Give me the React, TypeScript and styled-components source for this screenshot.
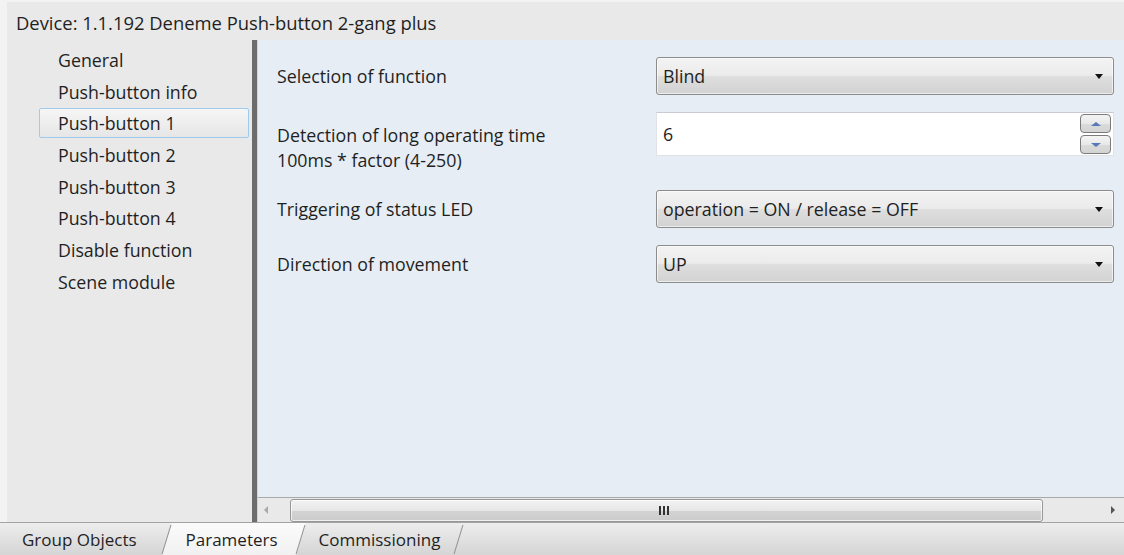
import React from "react";
import styled, { createGlobalStyle, css } from "styled-components";

const Global = createGlobalStyle`
  html, body { margin: 0; padding: 0; background: #f2f2f2; }
  * { box-sizing: border-box; }
  body { font-family: "Open Sans", "Noto Sans", sans-serif; color: #1f1f1f; }
`;

const Frame = styled.div`
  width: 1124px;
  height: 555px;
  overflow: hidden;
  background: #f3f3f3;
  padding: 2px 0 0 7px;
  display: flex;
`;

const Window = styled.div`
  flex: 1;
  display: flex;
  flex-direction: column;
  background: #e9e9e9;
  font-size: 17.8px;
`;

const Header = styled.div`
  height: 38px;
  flex: none;
  display: flex;
  align-items: center;
  padding-left: 9px;
  padding-top: 2px;
  font-size: 18.4px;
`;

const Main = styled.div`
  flex: 1;
  display: flex;
  min-height: 0;
`;

const Nav = styled.ul`
  width: 245px;
  flex: none;
  list-style: none;
  margin: 0;
  padding: 4px 0 0 32px;
  display: grid;
  grid-auto-rows: 31.7px;
  align-content: start;
`;

const NavItem = styled.li<{ $active?: boolean }>`
  display: flex;
  align-items: center;
  padding-left: 18px;
  width: 210px;
  border: 1px solid transparent;
  border-radius: 2px;
  white-space: nowrap;
  ${(p) =>
    p.$active &&
    css`
      border-color: #9dcbf0;
      background: linear-gradient(#f6f6f6, #e6e6e6);
      margin: 1px 0;
    `}
`;

const Splitter = styled.div`
  width: 6px;
  flex: none;
  background: #6c6c6c;
  border-right: 1px solid #c8d3de;
`;

const Pane = styled.div`
  flex: 1;
  display: flex;
  flex-direction: column;
  background: #e6edf4;
  min-width: 0;
`;

const Params = styled.div`
  flex: 1;
  display: grid;
  grid-template-columns: 1fr 458px;
  column-gap: 16px;
  row-gap: 17px;
  align-content: start;
  padding: 17px 10px 0 19px;
`;

const Label = styled.div<{ $top?: number }>`
  align-self: ${(p) => (p.$top ? "start" : "center")};
  padding-top: ${(p) => p.$top ?? 0}px;
  line-height: 25px;
  white-space: nowrap;
`;

const Combo = styled.div`
  height: 38px;
  display: flex;
  align-items: center;
  padding: 0 10px 0 6px;
  border: 1px solid #8c8c8c;
  border-radius: 3px;
  background: linear-gradient(#f3f3f3 0%, #ebebeb 48%, #dedede 52%, #d2d2d2 100%);
  box-shadow: inset 0 0 0 1px rgba(255, 255, 255, 0.6);
`;

const ComboText = styled.span`
  flex: 1;
`;

const Caret = styled.span`
  width: 0;
  height: 0;
  border-left: 4px solid transparent;
  border-right: 4px solid transparent;
  border-top: 5px solid #111;
`;

const Spin = styled.div`
  height: 44px;
  display: flex;
  align-items: center;
  padding: 0 2px 0 6px;
  background: #fff;
  border: 1px solid #dfe3e8;
  border-top-color: #c8ccd2;
`;

const SpinValue = styled.span`
  flex: 1;
`;

const SpinButtons = styled.div`
  display: flex;
  flex-direction: column;
  gap: 2px;
`;

const SpinButton = styled.div<{ $down?: boolean }>`
  width: 31px;
  height: 19px;
  display: flex;
  align-items: center;
  justify-content: center;
  border: 1px solid #7b7b7b;
  border-radius: 4px;
  background: linear-gradient(#f4f4f4, #e8e8e8 50%, #dadada 51%, #d4d4d4);
  &::after {
    content: "";
    border-left: 5px solid transparent;
    border-right: 5px solid transparent;
    ${(p) =>
      p.$down
        ? css`border-top: 4px solid #5677b8;`
        : css`border-bottom: 4px solid #5677b8;`}
  }
`;

const HScroll = styled.div`
  height: 25px;
  flex: none;
  display: flex;
  align-items: center;
  background: #e9e9e9;
  border-top: 1px solid #a9a9a9;
`;

const ScrollArrow = styled.div<{ $right?: boolean; $dim?: boolean }>`
  width: 32px;
  height: 100%;
  flex: none;
  display: flex;
  align-items: center;
  justify-content: ${(p) => (p.$right ? "flex-end" : "flex-start")};
  padding: ${(p) => (p.$right ? "0 9px 0 0" : "0 0 0 6px")};
  &::after {
    content: "";
    border-top: 4px solid transparent;
    border-bottom: 4px solid transparent;
    ${(p) =>
      p.$right
        ? css`border-left: 4px solid ${p.$dim ? "#aaa" : "#555"};`
        : css`border-right: 4px solid ${p.$dim ? "#aaa" : "#555"};`}
  }
`;

const Track = styled.div`
  flex: 1;
  height: 100%;
  display: flex;
  align-items: center;
  padding-right: 49px;
`;

const Thumb = styled.div`
  flex: 1;
  height: 23px;
  display: flex;
  align-items: center;
  justify-content: center;
  border: 1px solid #979797;
  border-radius: 3px;
  background: linear-gradient(#f3f3f3, #e6e6e6 50%, #d4d4d4 51%, #cbcbcb);
  box-shadow: inset 0 0 0 1px rgba(255, 255, 255, 0.7);
`;

const Grip = styled.span`
  width: 10px;
  height: 9px;
  background: repeating-linear-gradient(90deg, #333 0 2px, transparent 2px 4px);
  margin-right: 6px;
`;

const TabBar = styled.div`
  height: 33px;
  flex: none;
  display: flex;
  align-items: stretch;
  border-top: 1px solid #a3a3a3;
  background: linear-gradient(#ededed, #d5d5d5);
  padding-left: 8px;
  margin-left: -7px;
  font-size: 17px;
`;

const Tab = styled.div<{ $active?: boolean; $pl: number; $pr: number }>`
  position: relative;
  display: flex;
  align-items: center;
  padding: 0 ${(p) => p.$pr}px 0 ${(p) => p.$pl}px;
  white-space: nowrap;
  ${(p) =>
    p.$active &&
    css`
      &::before {
        content: "";
        position: absolute;
        inset: 0;
        background: linear-gradient(#fbfbfb, #f1f1f1);
        transform: skewX(-17deg);
        z-index: 0;
      }
    `}
  &::after {
    content: "";
    position: absolute;
    right: 0;
    top: 2px;
    bottom: 1px;
    width: 1px;
    background: #8f8f8f;
    transform: skewX(-17deg);
    z-index: 2;
  }
`;

const TabText = styled.span`
  position: relative;
  z-index: 1;
`;

const navItems = [
  "General",
  "Push-button info",
  "Push-button 1",
  "Push-button 2",
  "Push-button 3",
  "Push-button 4",
  "Disable function",
  "Scene module",
];

export default function App() {
  return (
    <>
      <Global />
      <Frame>
        <Window>
          <Header>Device: 1.1.192 Deneme Push-button 2-gang plus</Header>
          <Main>
            <Nav>
              {navItems.map((n, i) => (
                <NavItem key={n} $active={i === 2}>
                  {n}
                </NavItem>
              ))}
            </Nav>
            <Splitter />
            <Pane>
              <Params>
                <Label>Selection of function</Label>
                <Combo>
                  <ComboText>Blind</ComboText>
                  <Caret />
                </Combo>

                <Label $top={11}>
                  Detection of long operating time
                  <br />
                  100ms * factor (4-250)
                </Label>
                <Spin>
                  <SpinValue>6</SpinValue>
                  <SpinButtons>
                    <SpinButton />
                    <SpinButton $down />
                  </SpinButtons>
                </Spin>

                <Label>Triggering of status LED</Label>
                <Combo>
                  <ComboText>operation = ON / release = OFF</ComboText>
                  <Caret />
                </Combo>

                <Label>Direction of movement</Label>
                <Combo>
                  <ComboText>UP</ComboText>
                  <Caret />
                </Combo>
              </Params>
              <HScroll>
                <ScrollArrow $dim />
                <Track>
                  <Thumb>
                    <Grip />
                  </Thumb>
                </Track>
                <ScrollArrow $right />
              </HScroll>
            </Pane>
          </Main>
          <TabBar>
            <Tab $pl={14} $pr={30}>
              <TabText>Group Objects</TabText>
            </Tab>
            <Tab $active $pl={19} $pr={23}>
              <TabText>Parameters</TabText>
            </Tab>
            <Tab $pl={18} $pr={19}>
              <TabText>Commissioning</TabText>
            </Tab>
          </TabBar>
        </Window>
      </Frame>
    </>
  );
}
